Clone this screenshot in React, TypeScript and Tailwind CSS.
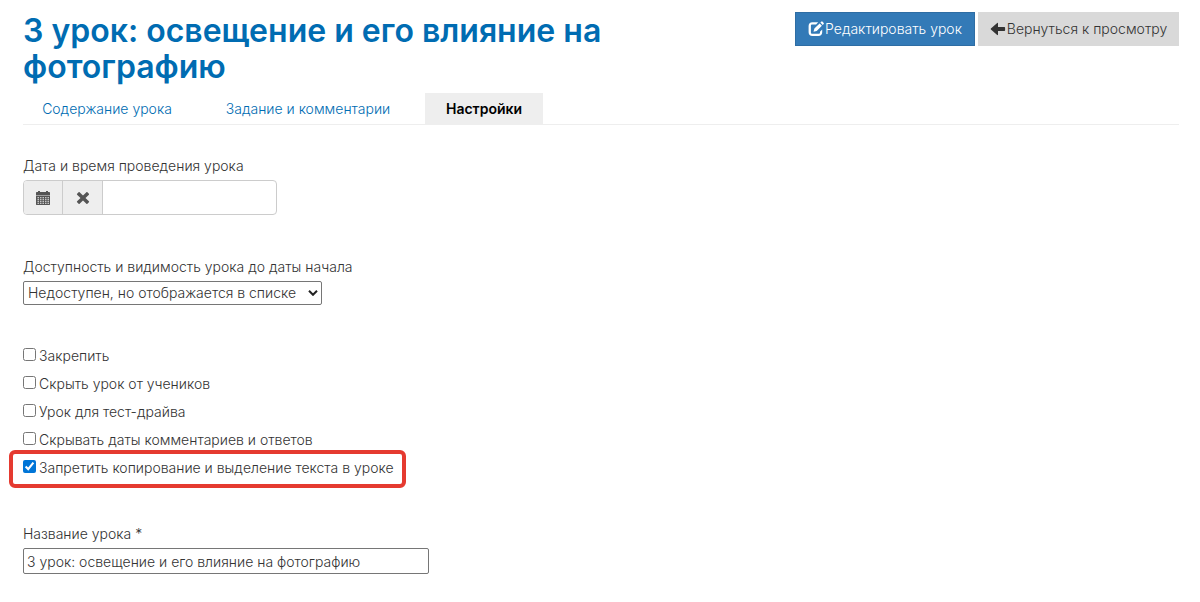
import React, { useState } from 'react';

const TITLE = '3 урок: освещение и его влияние на фотографию';

const TABS = [
  { title: 'Содержание урока', width: 'w-[168px]' },
  { title: 'Задание и комментарии', width: 'w-[202px]' },
  { title: 'Настройки', width: 'w-[118px]' },
];

const OPTIONS = [
  { id: 'pinned', label: 'Закрепить' },
  { id: 'hidden', label: 'Скрыть урок от учеников' },
  { id: 'test-drive', label: 'Урок для тест-драйва' },
  { id: 'hide-dates', label: 'Скрывать даты комментариев и ответов' },
  { id: 'no-copy', label: 'Запретить копирование и выделение текста в уроке', highlighted: true },
];

const EditIcon = () => (
  <svg viewBox="0 0 16 16" className="h-4 w-4 shrink-0" fill="currentColor" aria-hidden="true">
    <path d="M10.2 1.2H4.4C2 1.2 .6 2.7 .6 5v6.2c0 2.4 1.4 3.8 3.8 3.8h6c2.4 0 3.8-1.4 3.8-3.8V8.6l-2.2 2.1v.7c0 .9-.5 1.4-1.4 1.4H4.3c-.9 0-1.4-.5-1.4-1.4V4.9c0-.9.5-1.4 1.400-1.4h3.800z" />
    <path d="M5.500 10.800l.9-3.200 5.200-5.200 2.300 2.300-5.200 5.200zM12.400 1.600l1-1c.3-.3.7-.3 1 0l1.300 1.300c.3.3.3.7 0 1l-1 1z" />
  </svg>
);

const ArrowIcon = () => (
  <svg viewBox="0 0 16 16" className="h-4 w-4 shrink-0" fill="currentColor" aria-hidden="true">
    <path d="M.9 7.500L7.200 2c.4-.3.8-.1.8.4V6h6.400c.4 0 .7.3.7.7v2.600c0 .4-.3.7-.7.7H8v3.600c0 .5-.4.7-.8.4L.9 8.500c-.3-.3-.3-.7 0-1z" />
  </svg>
);

const CalendarIcon = () => (
  <svg viewBox="0 0 16 16" className="h-4 w-4" fill="currentColor" aria-hidden="true">
    <path d="M1 3c0-.6.4-1 1-1h1V1h2v1h6V1h2v1h1c.6 0 1 .4 1 1v2H1z" />
    <path
      fillRule="evenodd"
      d="M1 5.500h14v9c0 .3-.2.5-.5.5h-13c-.3 0-.5-.2-.5-.5zM2.500 7.300v1h1.500v-1zm2.500 0v1h1.500v-1zm2.500 0v1H9v-1zm2.500 0v1h1.500v-1zm2.500 0v1h1.500v-1zM2.500 9.300v1h1.500v-1zm2.500 0v1h1.500v-1zm2.500 0v1H9v-1zm2.500 0v1h1.500v-1zm2.500 0v1h1.500v-1zM2.500 11.300v1h1.500v-1zm2.500 0v1h1.500v-1zm2.500 0v1H9v-1zm2.500 0v1h1.500v-1zm2.500 0v1h1.500v-1zM2.500 13.200v.8h1.500v-.8zm2.500 0v.8h1.500v-.8zm2.500 0v.8H9v-.8zm2.500 0v.8h1.500v-.8zm2.500 0v.8h1.500v-.8z"
    />
  </svg>
);

const RemoveIcon = () => (
  <svg viewBox="0 0 16 16" className="h-4 w-4" fill="currentColor" aria-hidden="true">
    <path d="M4.600 2.200L8 5.600l3.400-3.400c.3-.3.7-.3 1 0l1.500 1.500c.3.3.3.7 0 1L10.500 8l3.400 3.300c.3.3.3.7 0 1l-1.500 1.500c-.3.3-.7.3-1 0L8 10.400l-3.400 3.400c-.3.3-.7.3-1 0l-1.500-1.500c-.3-.3-.3-.7 0-1L5.500 8 2.100 4.700c-.3-.3-.3-.7 0-1l1.500-1.500c.3-.3.7-.3 1 0z" />
  </svg>
);

const SelectArrow = () => (
  <svg viewBox="0 0 10 6" className="pointer-events-none absolute top-[9px] right-1 h-[6px] w-[10px]" fill="none" stroke="#222" strokeWidth="2" aria-hidden="true">
    <path d="M1 .8l4 4 4-4" />
  </svg>
);

export default () => {
  const [activeTab, setActiveTab] = useState('Настройки');
  const [checked, setChecked] = useState<string[]>(['no-copy']);
  const [date, setDate] = useState('');
  const [name, setName] = useState(TITLE);

  const toggle = (id: string) => {
    setChecked(checked.includes(id) ? checked.filter(item => item !== id) : [...checked, id]);
  };

  return (
    <main className="min-h-screen bg-white pt-3 pr-[21px] pb-6 pl-[23px] font-['Inter',sans-serif] text-[14px] leading-5 font-light text-[#333]">
      <header className="flex items-start justify-between">
        <h1 className="max-w-[600px] pt-px text-[32px] leading-9 font-semibold text-[#006cb2]">{TITLE}</h1>
        <div className="flex shrink-0 gap-[3px]">
          <button type="button" className="flex h-[34px] w-[180px] items-center justify-center gap-px border border-[#2e6da4] bg-[#337ab7] whitespace-nowrap text-white">
            <EditIcon />
            Редактировать урок
          </button>
          <button type="button" className="flex h-[34px] w-[201px] items-center justify-center gap-px bg-[#d9d9d9] whitespace-nowrap text-[#333]">
            <ArrowIcon />
            Вернуться к просмотру
          </button>
        </div>
      </header>

      <nav className="mt-2 flex gap-4 border-b border-[#eee] text-center leading-[21px] whitespace-nowrap">
        {TABS.map(({ title, width }) => (
          <a
            key={title}
            href="#"
            onClick={() => setActiveTab(title)}
            className={`${width} py-[5px] ${title === activeTab ? 'bg-[#eee] font-semibold text-black' : 'text-[#006cb2]'}`}
          >
            {title}
          </a>
        ))}
      </nav>

      <form>
        <div className="mt-[31px]">
          <label htmlFor="lesson-date" className="block">Дата и время проведения урока</label>
          <div className="mt-1 flex h-[35px] w-[254px] overflow-hidden rounded border border-[#ccc]">
            <button type="button" aria-label="Выбрать дату" className="flex w-[39px] items-center justify-center border-r border-[#ccc] bg-[#eee] text-[#555]">
              <CalendarIcon />
            </button>
            <button type="button" aria-label="Очистить дату" onClick={() => setDate('')} className="flex w-10 items-center justify-center border-r border-[#ccc] bg-[#eee] text-[#555]">
              <RemoveIcon />
            </button>
            <input id="lesson-date" type="text" value={date} onChange={event => setDate(event.target.value)} className="min-w-0 flex-1 px-3 outline-none" />
          </div>
        </div>

        <div className="mt-[42px]">
          <label htmlFor="lesson-access" className="block">Доступность и видимость урока до даты начала</label>
          <div className="relative mt-1 w-[299px]">
            <select id="lesson-access" className="block h-6 w-full appearance-none rounded-xs border border-[#767676] bg-white pl-1">
              <option>Недоступен, но отображается в списке</option>
            </select>
            <SelectArrow />
          </div>
        </div>

        <ul className="mt-[37px]">
          {OPTIONS.map(({ id, label, highlighted }) => (
            <li key={id} className="flex h-7">
              <label htmlFor={id} className="relative flex items-center gap-[3px]">
                <input id={id} type="checkbox" checked={checked.includes(id)} onChange={() => toggle(id)} className="mb-1 h-[13px] w-[13px] accent-[#0075d7]" />
                {label}
                {highlighted && <span className="pointer-events-none absolute -top-1 -right-3 -left-[14px] h-[38px] rounded-md border-4 border-[#e53a30]" />}
              </label>
            </li>
          ))}
        </ul>

        <div className="mt-[42px]">
          <label htmlFor="lesson-name" className="block">Название урока *</label>
          <input id="lesson-name" type="text" value={name} onChange={event => setName(event.target.value)} className="mt-1 block h-[26px] w-[406px] rounded-xs border border-[#767676] px-[3px]" />
        </div>
      </form>
    </main>
  );
};
